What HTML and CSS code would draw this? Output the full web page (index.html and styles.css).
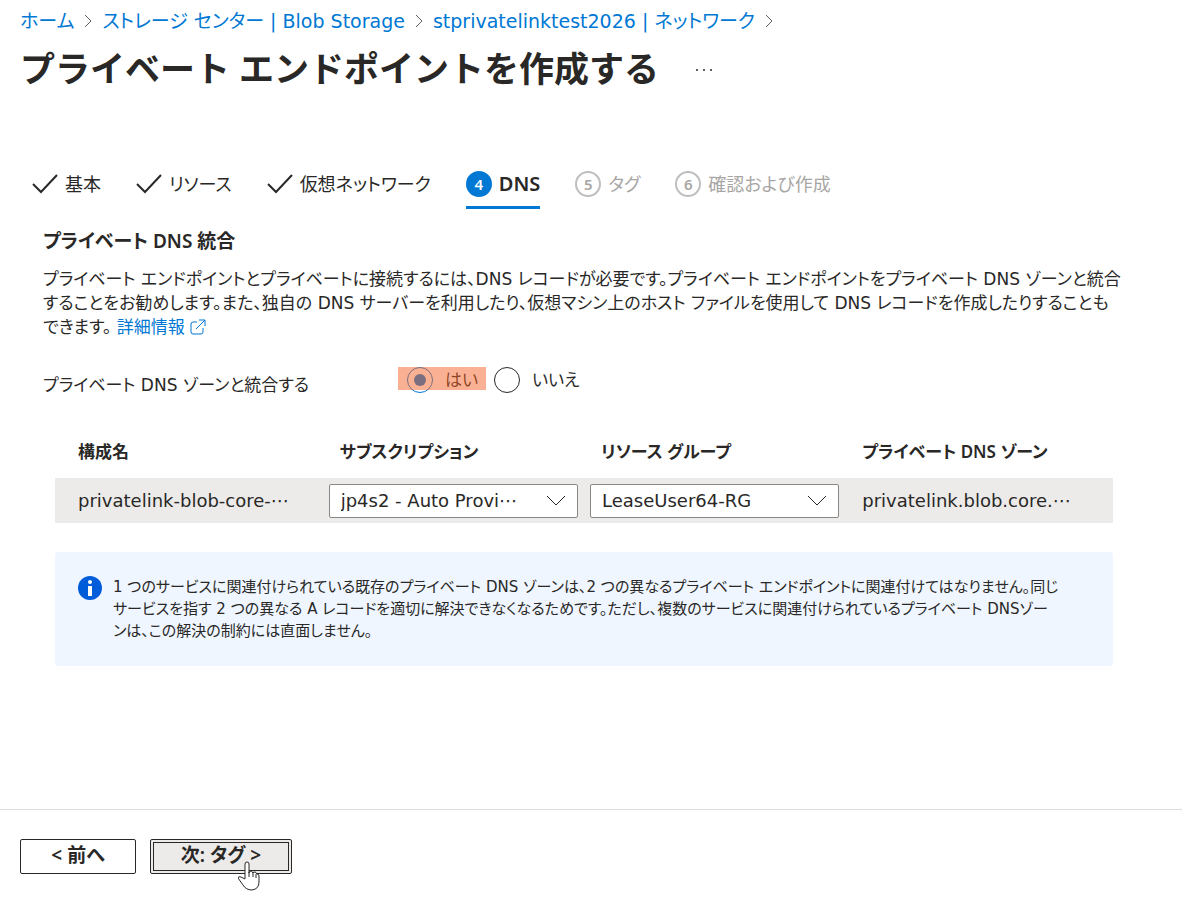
FILE: index.html
```html
<!DOCTYPE html>
<html lang="ja">

<head>
    <meta charset="utf-8">
    <meta name="viewport" content="width=device-width, initial-scale=1">
    <title>プライベート エンドポイントを作成する</title>
    <link rel="stylesheet" href="styles.css">
</head>

<body>
    <header class="header">
        <nav class="breadcrumb">
            <a href="#">ホーム</a>
            <svg class="chevron" viewBox="0 0 8 14"><path d="M1 1l6 6-6 6"/></svg>
            <a href="#">ストレージ センター | Blob Storage</a>
            <svg class="chevron" viewBox="0 0 8 14"><path d="M1 1l6 6-6 6"/></svg>
            <a href="#">stprivatelinktest2026 | ネットワーク</a>
            <svg class="chevron" viewBox="0 0 8 14"><path d="M1 1l6 6-6 6"/></svg>
        </nav>
        <div class="title-row">
            <h1>プライベート エンドポイントを作成する</h1>
            <button class="more" type="button" aria-label="その他">
                <svg viewBox="0 0 18 4"><circle cx="2" cy="2" r="1"/><circle cx="9" cy="2" r="1"/><circle cx="16" cy="2" r="1"/></svg>
            </button>
        </div>
    </header>

    <main class="content">
        <!-- Wizard steps -->
        <nav class="steps">
            <a class="step" href="#"><svg class="check" viewBox="0 0 26 20"><path d="M1 10l8 8L25 1"/></svg>基本</a>
            <a class="step" href="#"><svg class="check" viewBox="0 0 26 20"><path d="M1 10l8 8L25 1"/></svg>リソース</a>
            <a class="step" href="#"><svg class="check" viewBox="0 0 26 20"><path d="M1 10l8 8L25 1"/></svg>仮想ネットワーク</a>
            <a class="step active" href="#"><span class="number">4</span>DNS</a>
            <a class="step pending" href="#"><span class="number">5</span>タグ</a>
            <a class="step pending" href="#"><span class="number">6</span>確認および作成</a>
        </nav>

        <section class="section">
            <h2>プライベート DNS 統合</h2>
            <p class="description">プライベート エンドポイントとプライベートに接続するには、DNS レコードが必要です。プライベート エンドポイントをプライベート DNS ゾーンと統合<br>することをお勧めします。また、独自の DNS サーバーを利用したり、仮想マシン上のホスト ファイルを使用して DNS レコードを作成したりすることも<br>できます。 <a href="#">詳細情報 <svg class="external" viewBox="0 0 16 16"><path d="M7 3H3Q1 3 1 5v8q0 2 2 2h8q2 0 2-2V9M9 1h6v6M15 1L6 10"/></svg></a></p>

            <div class="field" role="radiogroup" aria-labelledby="integrate">
                <span class="field-label" id="integrate">プライベート DNS ゾーンと統合する</span>
                <div class="options">
                    <span class="option marked">
                        <input type="radio" id="yes" name="integrate" checked>
                        <label for="yes">はい</label>
                    </span>
                    <span class="option">
                        <input type="radio" id="no" name="integrate">
                        <label for="no">いいえ</label>
                    </span>
                </div>
            </div>
        </section>

        <div class="zones">
            <table>
                <thead>
                    <tr>
                        <th class="name">構成名</th>
                        <th class="sub">サブスクリプション</th>
                        <th class="group">リソース グループ</th>
                        <th class="zone">プライベート DNS ゾーン</th>
                    </tr>
                </thead>
                <tbody>
                    <tr>
                        <td>privatelink-blob-core-⋯</td>
                        <td class="cell-select">
                            <div class="select">
                                <select aria-label="サブスクリプション"><option>jp4s2 - Auto Provi⋯</option></select>
                                <svg viewBox="0 0 20 12"><path d="M1 1l9 9 9-9"/></svg>
                            </div>
                        </td>
                        <td class="cell-select">
                            <div class="select">
                                <select aria-label="リソース グループ"><option>LeaseUser64-RG</option></select>
                                <svg viewBox="0 0 20 12"><path d="M1 1l9 9 9-9"/></svg>
                            </div>
                        </td>
                        <td>privatelink.blob.core.⋯</td>
                    </tr>
                </tbody>
            </table>

            <div class="info">
                <svg class="info-icon" viewBox="0 0 24 24"><circle cx="12" cy="12" r="12"/><circle class="mark" cx="12" cy="6" r="2"/><path class="mark" d="M10 10h4v10h-4z"/></svg>
                <p>1 つのサービスに関連付けられている既存のプライベート DNS ゾーンは、2 つの異なるプライベート エンドポイントに関連付けてはなりません。同じ<br>サービスを指す 2 つの異なる A レコードを適切に解決できなくなるためです。ただし、複数のサービスに関連付けられているプライベート DNSゾー<br>ンは、この解決の制約には直面しません。</p>
            </div>
        </div>
    </main>

    <footer class="footer">
        <button class="button" type="button">&lt; 前へ</button>
        <button class="button next" type="button">次: タグ &gt;
            <svg class="pointer" viewBox="0 0 22 30"><path d="M7 18V3q0-2 2-2t2 2v9q0-2 2-2 1 0 2 2 0-1 2-1 1 0 2 2 2 0 2 2v6q0 7-7 8-6 0-9-5l-5-7q0-2 3-1z"/><path d="M11 11v5M15 11v5M18 13v4"/></svg>
        </button>
    </footer>
</body>

</html>
```
FILE: styles.css
```css
* {
    box-sizing: border-box;
}

body {
    margin: 0;
    min-height: 100vh;
    display: flex;
    flex-direction: column;
    background: #fff;
    color: #292827;
    font-family: "DejaVu Sans", "Noto Sans CJK JP", sans-serif;
    font-size: 17px;
    line-height: 24px;
    font-feature-settings: "palt";
}

a {
    color: #0078d4;
    text-decoration: none;
}

h1, h2, p {
    margin: 0;
}

svg {
    fill: none;
    stroke: currentColor;
}

button, select {
    color: inherit;
    font: inherit;
    font-feature-settings: inherit;
}

h1, h2, th, .step, .button {
    font-family: "Noto Sans", "Noto Sans CJK JP", sans-serif;
}

.header {
    padding: 7px 20px 0;
}

.breadcrumb {
    display: flex;
    align-items: center;
    gap: 10px;
    line-height: 28px;
    font-size: 19px;
    white-space: nowrap;
}

.chevron {
    width: 8px;
    height: 14px;
    color: #605e5c;
}

.title-row {
    display: flex;
    align-items: center;
    gap: 32px;
    margin-top: 10px;
}

h1 {
    font-size: 35px;
    line-height: 48px;
    font-weight: 700;
    font-feature-settings: normal;
    white-space: nowrap;
}

.more {
    padding: 6px 4px 4px;
    border: 0;
    background: none;
}

.more svg {
    display: block;
    width: 18px;
    height: 4px;
    fill: currentColor;
    stroke: none;
}

.content {
    flex: 1;
    padding: 69px 69px 0 32px;
}

/* Wizard steps */
.steps {
    display: flex;
    gap: 35px;
    white-space: nowrap;
}

.step {
    display: flex;
    align-items: center;
    gap: 7px;
    height: 47px;
    border-bottom: 3px solid transparent;
    color: inherit;
    font-size: 18px;
}

.check {
    width: 26px;
    height: 20px;
    stroke-width: 2;
}

.number {
    width: 26px;
    height: 26px;
    border: 2px solid #c0bebc;
    border-radius: 50%;
    line-height: 22px;
    text-align: center;
    font-size: 15px;
    font-weight: 600;
}

.step.active {
    border-bottom-color: #0078d4;
    font-size: 20px;
    font-weight: 600;
}

.active .number {
    border-color: #0078d4;
    background: #0078d4;
    color: #fff;
}

.step.pending {
    color: #a8a6a4;
}

.section {
    padding: 18px 0 0 11px;
}

h2 {
    font-size: 19px;
    line-height: 28px;
    font-weight: 600;
}

.description {
    margin-top: 12px;
    white-space: nowrap;
}

.external {
    width: 16px;
    height: 16px;
    vertical-align: -2px;
}

.field {
    display: flex;
    align-items: center;
    margin-top: 24px;
}

.field-label {
    width: 355px;
    padding-top: 10px;
}

.options {
    display: flex;
    gap: 8px;
}

.option {
    position: relative;
    display: flex;
    align-items: center;
    gap: 12px;
}

.option.marked {
    padding: 0 8px 0 9px;
}

/* Highlighter over the chosen answer */
.option.marked::after {
    content: "";
    position: absolute;
    inset: 0 0 3px;
    background: rgba(245, 100, 40, 0.5);
    pointer-events: none;
}

.option input {
    appearance: none;
    display: flex;
    align-items: center;
    justify-content: center;
    width: 26px;
    height: 26px;
    margin: 0;
    border: 1px solid #292827;
    border-radius: 50%;
}

.option input:checked {
    border-color: #0078d4;
}

.option input:checked::before {
    content: "";
    width: 12px;
    height: 12px;
    border-radius: 50%;
    background: #0078d4;
}

/* Table */
.zones {
    padding-left: 23px;
}

table {
    width: 100%;
    margin-top: 29px;
    border-collapse: collapse;
    table-layout: fixed;
}

th, td {
    height: 45px;
    padding: 0 0 0 17px;
    text-align: left;
    white-space: nowrap;
}

th {
    height: 52px;
    font-weight: 600;
}

th:first-child, td:first-child {
    padding-left: 23px;
}

.name, .zone {
    width: 25.3%;
}

.sub, .group {
    width: 24.7%;
}

tbody {
    background: #ecebe9;
    font-size: 18px;
}

.cell-select {
    padding: 0 6px;
}

.select {
    position: relative;
}

.select select {
    appearance: none;
    display: block;
    width: 100%;
    height: 34px;
    padding: 0 36px 0 11px;
    border: 1px solid #8a8886;
    border-radius: 2px;
    background: #fff;
}

.select svg {
    position: absolute;
    top: 11px;
    right: 12px;
    width: 20px;
    height: 12px;
    pointer-events: none;
}

.info {
    display: flex;
    gap: 11px;
    margin-top: 29px;
    padding: 24px 24px 24px 23px;
    border-radius: 3px;
    background: #eff6ff;
    font-size: 15px;
    line-height: 22px;
    white-space: nowrap;
}

.info-icon {
    flex: none;
    width: 24px;
    height: 24px;
    fill: #015cda;
    stroke: none;
}

.info-icon .mark {
    fill: #fff;
}

/* Footer */
.footer {
    display: flex;
    gap: 14px;
    height: 90px;
    padding: 29px 20px 0;
    border-top: 1px solid #dcdcdc;
}

.button {
    position: relative;
    width: 116px;
    height: 35px;
    padding: 0 0 4px;
    border: 1px solid #292827;
    border-radius: 2px;
    background: #fff;
    font-size: 19px;
    font-weight: 600;
}

.next {
    width: 142px;
    background: #ecebe9;
    outline: 1px solid #292827;
    outline-offset: -4px;
}

.pointer {
    position: absolute;
    top: 21px;
    left: 87px;
    width: 22px;
    height: 30px;
    fill: #fff;
}
```
